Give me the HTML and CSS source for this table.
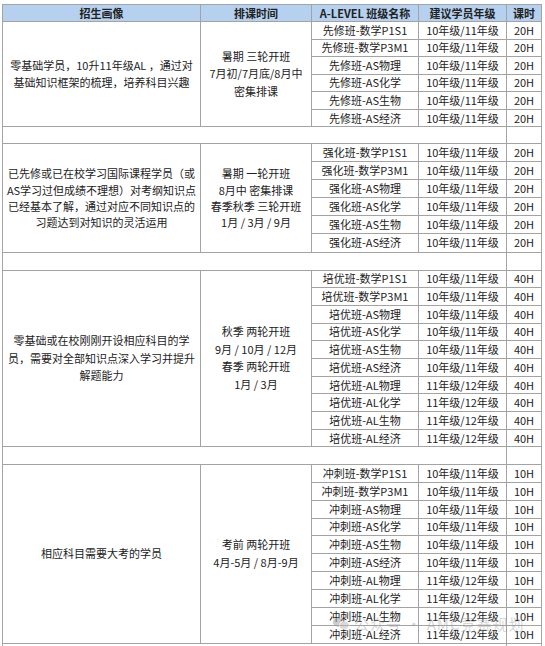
FILE: index.html
```html
<!DOCTYPE html>
<html lang="zh">
<head>
<meta charset="utf-8">
<link rel="stylesheet" href="styles.css">
</head>
<body>
<div class="page">
<table class="plan">
<colgroup>
<col class="c1"><col class="c2"><col class="c3"><col class="c4"><col class="c5">
</colgroup>
<thead>
<tr class="head">
<th>招生画像</th><th>排课时间</th><th>A-LEVEL 班级名称</th><th>建议学员年级</th><th>课时</th>
</tr>
</thead>
<tbody>
<tr class="r1">
<td rowspan="6" class="desc">零基础学员，10升11年级AL ，通过对<br>基础知识框架的梳理，培养科目兴趣</td>
<td rowspan="6" class="time">暑期 三轮开班<br>7月初/7月底/8月中<br>密集排课</td>
<td>先修班-数学P1S1</td><td>10年级/11年级</td><td>20H</td>
</tr>
<tr class="r1"><td>先修班-数学P3M1</td><td>10年级/11年级</td><td>20H</td></tr>
<tr class="r1"><td>先修班-AS物理</td><td>10年级/11年级</td><td>20H</td></tr>
<tr class="r1"><td>先修班-AS化学</td><td>10年级/11年级</td><td>20H</td></tr>
<tr class="r1"><td>先修班-AS生物</td><td>10年级/11年级</td><td>20H</td></tr>
<tr class="r1"><td>先修班-AS经济</td><td>10年级/11年级</td><td>20H</td></tr>
<tr class="gap g1"><td colspan="4"></td><td></td></tr>

<tr class="r2">
<td rowspan="6" class="desc tight">已先修或已在校学习国际课程学员（或<br>AS学习过但成绩不理想）对考纲知识点<br>已经基本了解，通过对应不同知识点的<br>习题达到对知识的灵活运用</td>
<td rowspan="6" class="time tight">暑期 一轮开班<br>8月中 密集排课<br>春季秋季 三轮开班<br>1月 / 3月 / 9月</td>
<td>强化班-数学P1S1</td><td>10年级/11年级</td><td>20H</td>
</tr>
<tr class="r2"><td>强化班-数学P3M1</td><td>10年级/11年级</td><td>20H</td></tr>
<tr class="r2"><td>强化班-AS物理</td><td>10年级/11年级</td><td>20H</td></tr>
<tr class="r2"><td>强化班-AS化学</td><td>10年级/11年级</td><td>20H</td></tr>
<tr class="r2"><td>强化班-AS生物</td><td>10年级/11年级</td><td>20H</td></tr>
<tr class="r2"><td>强化班-AS经济</td><td>10年级/11年级</td><td>20H</td></tr>
<tr class="gap g2"><td colspan="4"></td><td></td></tr>

<tr class="r3">
<td rowspan="10" class="desc">零基础或在校刚刚开设相应科目的学<br>员，需要对全部知识点深入学习并提升<br>解题能力</td>
<td rowspan="10" class="time">秋季 两轮开班<br>9月 / 10月 / 12月<br>春季 两轮开班<br>1月 / 3月</td>
<td>培优班-数学P1S1</td><td>10年级/11年级</td><td>40H</td>
</tr>
<tr class="r3"><td>培优班-数学P3M1</td><td>10年级/11年级</td><td>40H</td></tr>
<tr class="r3"><td>培优班-AS物理</td><td>10年级/11年级</td><td>40H</td></tr>
<tr class="r3"><td>培优班-AS化学</td><td>10年级/11年级</td><td>40H</td></tr>
<tr class="r3"><td>培优班-AS生物</td><td>10年级/11年级</td><td>40H</td></tr>
<tr class="r3"><td>培优班-AS经济</td><td>10年级/11年级</td><td>40H</td></tr>
<tr class="r3"><td>培优班-AL物理</td><td>11年级/12年级</td><td>40H</td></tr>
<tr class="r3"><td>培优班-AL化学</td><td>11年级/12年级</td><td>40H</td></tr>
<tr class="r3"><td>培优班-AL生物</td><td>11年级/12年级</td><td>40H</td></tr>
<tr class="r3"><td>培优班-AL经济</td><td>11年级/12年级</td><td>40H</td></tr>
<tr class="gap g3"><td colspan="4"></td><td></td></tr>

<tr class="r4">
<td rowspan="10" class="desc">相应科目需要大考的学员</td>
<td rowspan="10" class="time">考前 两轮开班<br>4月-5月 / 8月-9月</td>
<td>冲刺班-数学P1S1</td><td>10年级/11年级</td><td>10H</td>
</tr>
<tr class="r4"><td>冲刺班-数学P3M1</td><td>10年级/11年级</td><td>10H</td></tr>
<tr class="r4"><td>冲刺班-AS物理</td><td>10年级/11年级</td><td>10H</td></tr>
<tr class="r4"><td>冲刺班-AS化学</td><td>10年级/11年级</td><td>10H</td></tr>
<tr class="r4"><td>冲刺班-AS生物</td><td>10年级/11年级</td><td>10H</td></tr>
<tr class="r4"><td>冲刺班-AS经济</td><td>10年级/11年级</td><td>10H</td></tr>
<tr class="r4"><td>冲刺班-AL物理</td><td>11年级/12年级</td><td>10H</td></tr>
<tr class="r4"><td>冲刺班-AL化学</td><td>11年级/12年级</td><td>10H</td></tr>
<tr class="r4"><td>冲刺班-AL生物</td><td>11年级/12年级</td><td>10H</td></tr>
<tr class="r4"><td>冲刺班-AL经济</td><td>11年级/12年级</td><td>10H</td></tr>
<tr class="gap g4"><td colspan="4"></td><td></td></tr>
</tbody>
</table>
<div class="watermark">
<svg class="wm-icon" viewBox="0 0 20 16" width="18" height="15"><ellipse cx="7.5" cy="6.5" rx="6.5" ry="5.3" fill="#9a9a9a"/><ellipse cx="13.5" cy="10" rx="5.5" ry="4.5" fill="#b5b5b5" stroke="#fff" stroke-width="0.8"/></svg>
<span>公众号 · AMC竞赛规划</span>
</div>
</div>
</body>
</html>
```

FILE: styles.css
```css
html, body {
  margin: 0;
  padding: 0;
  background: #ffffff;
}
.page {
  position: relative;
  padding: 4px 0 0 2px;
  width: 545px;
  height: 646px;
  box-sizing: border-box;
  overflow: hidden;
}
.plan {
  border-collapse: collapse;
  table-layout: fixed;
  width: 539px;
  font-family: "Noto Sans CJK SC", "Noto Sans", sans-serif;
  font-size: 11px;
  color: #222;
}
.c1 { width: 198px; }
.c2 { width: 111px; }
.c3 { width: 107px; }
.c4 { width: 88px; }
.c5 { width: 35px; }
.plan th,
.plan td {
  border: 1.5px solid #a3a3a3;
  padding: 0 1px;
  text-align: center;
  vertical-align: middle;
  line-height: 13px;
  white-space: nowrap;
  overflow: hidden;
}
.plan th {
  background: #b6d1ef;
  font-weight: bold;
  color: #222;
}
.head th { height: 16px; }
.r1 td { height: 16.55px; }
.r2 td { height: 17.1px; }
.r3 td { height: 16.7px; }
.r4 td { height: 16.95px; }
.g1 td { height: 15.7px; }
.g2 td { height: 17px; }
.g3 td { height: 16.3px; }
.g4 td { height: 16px; }
.plan td.desc,
.plan td.time {
  line-height: 17.5px;
  white-space: normal;
}
.plan td.tight {
  line-height: 16.2px;
}
.watermark {
  position: absolute;
  left: 332px;
  top: 613px;
  display: flex;
  align-items: center;
  gap: 4px;
  font-family: "Noto Sans CJK SC", "Noto Sans", sans-serif;
  font-size: 15px;
  color: rgba(150, 150, 150, 0.4);
  letter-spacing: 1px;
}
.wm-icon { opacity: 0.5; }
```
